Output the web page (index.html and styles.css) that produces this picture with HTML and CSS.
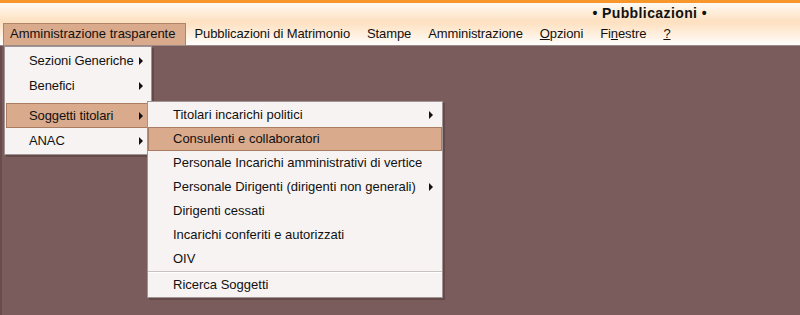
FILE: index.html
```html
<!DOCTYPE html>
<html lang="it">
<head>
  <meta charset="UTF-8">
  <link rel="stylesheet" href="styles.css">
  <title>Pubblicazioni</title>
</head>
<body>
  <div class="header">
    <div class="title-row">
      <span class="title">&bull; Pubblicazioni &bull;</span>
    </div>
    <div class="menubar">
      <span class="menu-item active">Amministrazione trasparente</span>
      <span class="menu-item">Pubblicazioni di Matrimonio</span>
      <span class="menu-item">Stampe</span>
      <span class="menu-item">Amministrazione</span>
      <span class="menu-item"><u>O</u>pzioni</span>
      <span class="menu-item">Fi<u>n</u>estre</span>
      <span class="menu-item"><u>?</u></span>
    </div>
  </div>

  <div class="desktop">
    <div class="dropdown main-menu">
      <div class="entry">Sezioni Generiche <span class="arrow"></span></div>
      <div class="entry">Benefici <span class="arrow"></span></div>
      <div class="spacer"></div>
      <div class="entry selected">Soggetti titolari <span class="arrow"></span></div>
      <div class="entry">ANAC <span class="arrow"></span></div>
    </div>

    <div class="dropdown sub-menu">
      <div class="entry">Titolari incarichi politici <span class="arrow"></span></div>
      <div class="entry selected">Consulenti e collaboratori</div>
      <div class="entry">Personale Incarichi amministrativi di vertice</div>
      <div class="entry">Personale Dirigenti (dirigenti non generali) <span class="arrow"></span></div>
      <div class="entry">Dirigenti cessati</div>
      <div class="entry">Incarichi conferiti e autorizzati</div>
      <div class="entry">OIV</div>
      <div class="separator"></div>
      <div class="entry">Ricerca Soggetti</div>
    </div>
  </div>
</body>
</html>
```

FILE: styles.css
```css
body {
  margin: 0;
  padding: 0;
  font-family: 'Liberation Sans', Arial, sans-serif;
  font-size: 13px;
  color: #111;
  background-color: #7b5c5d;
  width: 800px;
  height: 315px;
  overflow: hidden;
}

.header {
  height: 42px;
  border-top: 3px solid #f7962a;
  background: linear-gradient(#fffaf4 0%, #fde0bf 45%, #fff2e4 80%, #ffffff 100%);
  border-bottom: 1px solid #9b8a86;
}

.title-row {
  height: 20px;
  display: flex;
  justify-content: flex-end;
  padding-right: 93px;
}

.title {
  font-weight: bold;
  font-size: 14px;
  letter-spacing: 0.4px;
  line-height: 20px;
}

.menubar {
  display: flex;
  padding-left: 3px;
  height: 22px;
  letter-spacing: -0.1px;
}

.menu-item {
  padding: 0 8px 0 7px;
  line-height: 20px;
  border: 1px solid transparent;
  border-bottom: none;
}

.menu-item.active {
  background-color: #d9aa8c;
  border-color: #b08468;
  padding-left: 6px;
  padding-right: 10px;
  letter-spacing: 0;
}

.desktop {
  position: relative;
  height: 269px;
  border-left: 2px solid #6a4c4d;
}

.dropdown {
  position: absolute;
  background-color: #f7f3f2;
  border: 1px solid #a09594;
  box-shadow: 2px 2px 0 rgba(60, 40, 40, 0.35);
  padding: 1px 0;
  box-sizing: border-box;
}

.main-menu {
  left: 2px;
  top: 0;
  width: 148px;
  height: 109px;
}

.sub-menu {
  left: 145px;
  top: 55px;
  width: 296px;
  height: 197px;
}

.entry {
  height: 24px;
  line-height: 22px;
  border: 1px solid transparent;
  box-sizing: border-box;
  display: flex;
  align-items: center;
  justify-content: space-between;
  white-space: nowrap;
}

.main-menu .entry {
  height: 25px;
  margin: 0 1px;
  padding-left: 22px;
  padding-right: 6px;
  letter-spacing: -0.1px;
}

.sub-menu .entry {
  padding-left: 24px;
  padding-right: 8px;
}

.entry.selected {
  background-color: #d9aa8c;
  border-color: #a97d62;
}

.arrow {
  width: 0;
  height: 0;
  border-top: 4px solid transparent;
  border-bottom: 4px solid transparent;
  border-left: 4px solid #111;
}

.spacer {
  height: 5px;
}

.separator {
  height: 0;
  border-top: 1px solid #c9c2c0;
  border-bottom: 1px solid #ffffff;
}
```
